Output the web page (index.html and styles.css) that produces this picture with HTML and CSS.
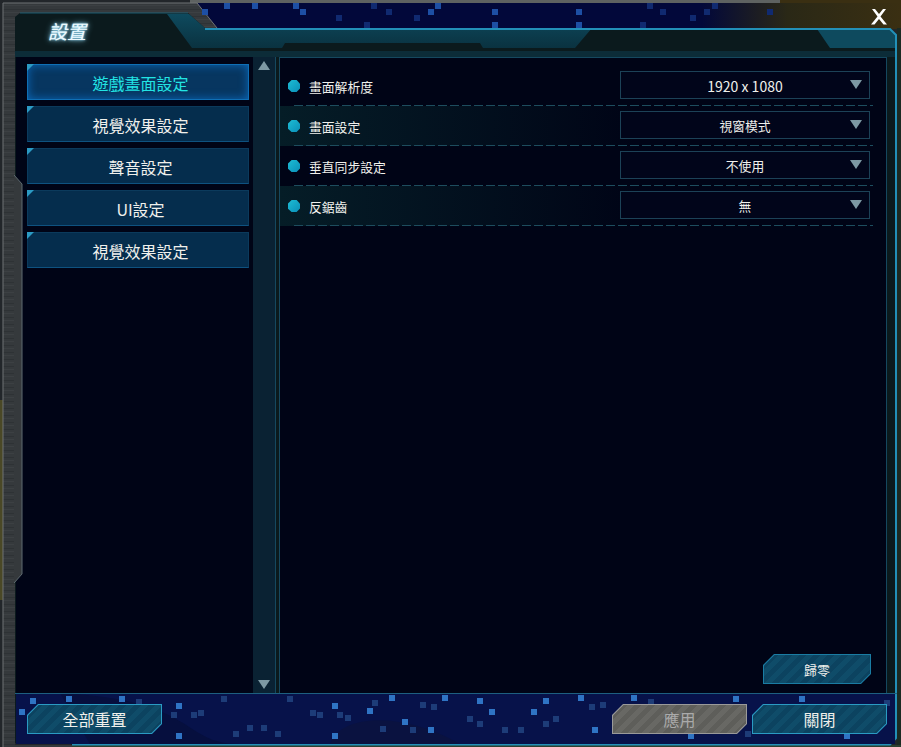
FILE: index.html
```html
<!DOCTYPE html>
<html lang="zh-Hant">
<head>
  <meta charset="UTF-8">
  <title>設置</title>
  <link rel="stylesheet" href="styles.css">
</head>
<body>
  <svg class="chrome" width="901" height="747" viewBox="0 0 901 747">
    <defs>
      <pattern id="metal" width="8" height="7" patternUnits="userSpaceOnUse">
        <rect width="8" height="7" fill="#35393c"/>
        <rect y="2" width="8" height="1" fill="#2e3235"/>
        <rect y="5" width="8" height="1" fill="#3c4043"/>
      </pattern>
      <linearGradient id="strip" x1="0" x2="1" y1="0" y2="0">
        <stop offset="0.72" stop-color="#02083a"/>
        <stop offset="0.84" stop-color="#2a2816"/>
        <stop offset="1" stop-color="#3a2f12"/>
      </linearGradient>
      <linearGradient id="teal" x1="0" x2="0" y1="0" y2="1">
        <stop offset="0" stop-color="#0e4a5e"/>
        <stop offset="1" stop-color="#0a3240"/>
      </linearGradient>
    </defs>

    <!-- backdrop -->
    <rect width="901" height="747" fill="#22262a"/>
    <rect y="400" width="3" height="200" fill="#4a4826"/>
    <rect x="190" width="711" height="3" fill="#5e6261"/>
    <rect x="780" width="121" height="3" fill="#3a2f12"/>
    <rect x="190" y="3" width="711" height="26" fill="url(#strip)"/>
    <rect x="897" y="28" width="4" height="719" fill="#1c2a22"/>
    <rect x="72" y="745" width="829" height="2" fill="#2c4030"/>

    <!-- metal frame -->
    <path d="M3 3H197L217 28H15V745H72V747H3Z" fill="url(#metal)"/>
    <path d="M3 3H197L217 28M3 3V747" fill="none" stroke="#6e7274"/>

    <!-- window body -->
    <path d="M15 17 20 13H188L205 28H890L897 35V738L890 745H72L70 743H15Z" fill="#0b1a1d"/>
    <path d="M20 13H188" fill="none" stroke="#1a5a70"/>
    <path d="M167 14H189L205 28H592L575 48H483L480 43H285L282 48H192Z" fill="url(#teal)"/>
    <path d="M817 29H890L897 35V48H830Z" fill="#0e4a5e"/>
    <rect x="15" y="51" width="882" height="6" fill="#0c2c38"/>
    <path d="M205 29H890L896 35V738L890 744.500H72" fill="none" stroke="#2290b8" stroke-width="2"/>

    <!-- footer -->
    <rect x="16" y="693" width="879" height="51" fill="#07124a"/>
    <path d="M60 693C200 700 180 744 240 744H90Z" fill="#060f3e"/>
    <path d="M330 744C340 715 400 710 460 744Z" fill="#0a1240"/>
    <g class="px bright">
      <rect x="30" y="698"/><rect x="66" y="696"/><rect x="119" y="696"/><rect x="19" y="709"/>
      <rect x="176" y="703"/><rect x="176" y="733"/><rect x="332" y="703"/><rect x="332" y="733"/>
      <rect x="367" y="708"/><rect x="389" y="695"/><rect x="402" y="719"/><rect x="428" y="727"/>
      <rect x="442" y="695"/><rect x="477" y="698"/><rect x="489" y="709"/><rect x="531" y="709"/>
      <rect x="543" y="698"/><rect x="578" y="695"/><rect x="592" y="727"/><rect x="631" y="695"/>
      <rect x="733" y="696"/><rect x="799" y="696"/><rect x="688" y="733"/><rect x="844" y="733"/>
    </g>
    <g class="px dim">
      <rect x="136" y="699"/><rect x="171" y="712"/><rect x="191" y="712"/><rect x="198" y="710"/>
      <rect x="221" y="696"/><rect x="287" y="696"/><rect x="247" y="725"/><rect x="261" y="725"/>
      <rect x="233" y="731"/><rect x="275" y="731"/><rect x="317" y="712"/><rect x="310" y="710"/>
      <rect x="337" y="712"/><rect x="345" y="715"/><rect x="372" y="700"/><rect x="431" y="704"/>
      <rect x="420" y="702"/><rect x="410" y="727"/><rect x="380" y="726"/><rect x="467" y="716"/>
      <rect x="477" y="721"/><rect x="502" y="727"/><rect x="518" y="727"/><rect x="543" y="721"/>
      <rect x="553" y="716"/><rect x="589" y="704"/><rect x="600" y="702"/><rect x="648" y="699"/>
      <rect x="884" y="700"/><rect x="745" y="731"/>
    </g>

    <!-- top strip pixels -->
    <g class="px top">
      <rect x="224" y="3"/><rect x="252" y="3"/><rect x="293" y="3"/><rect x="435" y="3"/>
      <rect x="202" y="9"/><rect x="300" y="9"/><rect x="428" y="9"/><rect x="492" y="9"/>
      <rect x="576" y="9"/><rect x="492" y="22"/><rect x="576" y="22"/>
    </g>
    <g class="px top-dim">
      <rect x="371" y="3"/><rect x="386" y="9"/><rect x="336" y="15"/><rect x="414" y="15"/>
      <rect x="364" y="22"/><rect x="640" y="22"/><rect x="660" y="9"/><rect x="704" y="9"/>
      <rect x="690" y="15"/><rect x="647" y="3"/><rect x="712" y="3"/><rect x="767" y="9"/>
    </g>
  </svg>

  <div class="window">
    <header class="title-bar">
      <h1>設置</h1>
    </header>

    <div class="panels">
      <nav class="side">
        <ul class="menu">
          <li class="menu-item active">遊戲畫面設定</li>
          <li class="menu-item">視覺效果設定</li>
          <li class="menu-item">聲音設定</li>
          <li class="menu-item">UI設定</li>
          <li class="menu-item">視覺效果設定</li>
        </ul>
        <div class="scrollbar">
          <span class="arrow up"></span>
          <span class="arrow"></span>
        </div>
      </nav>

      <section class="content">
        <div class="rows">
          <div class="row">
            <span class="bullet"></span>
            <span class="label">畫面解析度</span>
            <div class="select"><span class="value wide">1920 x 1080</span><span class="arrow"></span></div>
          </div>
          <div class="row">
            <span class="bullet"></span>
            <span class="label">畫面設定</span>
            <div class="select"><span class="value">視窗模式</span><span class="arrow"></span></div>
          </div>
          <div class="row">
            <span class="bullet"></span>
            <span class="label">垂直同步設定</span>
            <div class="select"><span class="value">不使用</span><span class="arrow"></span></div>
          </div>
          <div class="row">
            <span class="bullet"></span>
            <span class="label">反鋸齒</span>
            <div class="select"><span class="value">無</span><span class="arrow"></span></div>
          </div>
        </div>
        <div class="content-foot">
          <button class="btn small">歸零</button>
        </div>
      </section>
    </div>

    <footer class="actions">
      <button class="btn">全部重置</button>
      <div class="actions-right">
        <button class="btn disabled">應用</button>
        <button class="btn">關閉</button>
      </div>
    </footer>
  </div>

  <!-- bit of frame that cuts into the left panel -->
  <svg class="frame-notch" width="10" height="420" viewBox="0 0 10 420">
    <path d="M0 0 8 9V399L0 408Z" fill="#35393c"/>
    <path d="M0 0 8 9V399L0 408" fill="none" stroke="#5e6a70"/>
  </svg>

  <svg class="close" width="16" height="16" viewBox="0 0 16 16">
    <path d="M1 0H4L8 5 12 0H15L9.500 7.500 16 15.500H12.500L8 10 3.500 15.500H0L6.500 7.500Z" fill="#fff"/>
  </svg>
</body>
</html>
```

FILE: styles.css
```css
* {
  box-sizing: border-box;
}
html, body {
  margin: 0;
  height: 100%;
}
body {
  position: relative;
  width: 901px;
  height: 747px;
  overflow: hidden;
  background: #22262a;
  font-family: "Noto Sans CJK TC", "Liberation Sans", sans-serif;
  color: #f0f0ec;
}
.chrome {
  position: absolute;
  left: 0;
  top: 0;
}
.px rect {
  width: 6px;
  height: 6px;
}
.px.bright {
  fill: #2f74c4;
}
.px.dim {
  fill: #1d3c78;
}
.px.top {
  fill: #1d4fa4;
}
.px.top-dim {
  fill: #102a70;
}
.frame-notch {
  position: absolute;
  left: 14px;
  top: 175px;
}
.close {
  position: absolute;
  left: 871px;
  top: 9px;
}
.window {
  position: relative;
  width: 882px;
  height: 745px;
  margin-left: 15px;
  padding-top: 13px;
  display: flex;
  flex-direction: column;
}
.title-bar {
  height: 44px;
  padding: 6px 0 0 33px;
}
.title-bar h1 {
  margin: 0;
  font-size: 19px;
  line-height: 24px;
  font-weight: 400;
  font-style: italic;
  color: #eef9fd;
  text-shadow: 0 0 6px #8fd8f5, 0 0 3px #8fd8f5, 0 0 1px #c8eefa;
}
.panels {
  height: 636px;
  display: flex;
  gap: 3px;
  padding-left: 1px;
}
.side {
  width: 260px;
  display: flex;
  background: #000416;
  border-right: 1px solid #15485f;
}
.menu {
  list-style: none;
  margin: 0;
  padding: 7px 4px 0 11px;
  width: 237px;
  display: flex;
  flex-direction: column;
  gap: 6px;
}
.menu-item {
  position: relative;
  height: 36px;
  padding: 2px 0 0 5px;
  display: flex;
  align-items: center;
  justify-content: center;
  font-size: 16px;
  background: #052d4d;
  border: 1px solid #0b3a5c;
  border-bottom-color: #0e5280;
}
.menu-item::before {
  content: "";
  position: absolute;
  left: -1px;
  top: -1px;
  border-style: solid;
  border-width: 7px 7px 0 0;
  border-color: #2b9ac4 transparent transparent transparent;
}
.menu-item.active {
  color: #22e4e4;
  background: #073660;
  border-color: #0f6fb5;
  box-shadow: inset 0 0 10px #0b68ba;
}
.scrollbar {
  width: 22px;
  padding: 4px 0;
  display: flex;
  flex-direction: column;
  justify-content: space-between;
  align-items: center;
  background: #0a2233;
}
.arrow {
  width: 0;
  height: 0;
  border-left: 6px solid transparent;
  border-right: 6px solid transparent;
  border-top: 9px solid #7d99a4;
}
.arrow.up {
  border-top: 0;
  border-bottom: 9px solid #7d99a4;
}
.content {
  width: 608px;
  display: flex;
  flex-direction: column;
  justify-content: space-between;
  background: #000416;
  border: 1px solid #15485f;
  border-bottom: 0;
}
.rows {
  padding: 2px 13px 0 0;
}
.row {
  position: relative;
  height: 40px;
  display: flex;
  align-items: flex-start;
  padding: 5px 0 0 8px;
}
.row:first-child {
  height: 46px;
  padding-top: 11px;
}
.row:nth-child(even) {
  background: linear-gradient(90deg, #051d27, #000416 60%);
}
/* dashed rule under each row */
.row::after {
  content: "";
  position: absolute;
  left: 14px;
  right: 0;
  bottom: 0;
  height: 1px;
  background: repeating-linear-gradient(90deg, #1d4d5e 0 9px, transparent 9px 12px);
}
.bullet {
  width: 12px;
  height: 12px;
  margin-top: 9px;
  background: linear-gradient(135deg, #1dbcd4, #0a8fb8);
  clip-path: polygon(30% 0, 72% 0, 100% 32%, 100% 70%, 72% 100%, 30% 100%, 0 72%, 0 30%);
}
.label {
  margin: 8px 0 0 9px;
  font-size: 12.8px;
  line-height: 16px;
}
.select {
  position: relative;
  width: 250px;
  height: 28px;
  margin-left: auto;
  margin-right: 3px;
  display: flex;
  align-items: center;
  justify-content: center;
  font-size: 12.8px;
  background: #01051a;
  border: 1px solid #1c4257;
}
.select .arrow {
  position: absolute;
  right: 7px;
  top: 8px;
}
.value {
  padding-top: 1px;
}
.value.wide {
  font-size: 14px;
}
.content-foot {
  display: flex;
  justify-content: flex-end;
  padding: 0 15px 9px 0;
}
.actions {
  height: 52px;
  padding: 10px 10px 0 12px;
  display: flex;
  justify-content: space-between;
  border-top: 1px solid #1d5f80;
}
.actions-right {
  display: flex;
  gap: 5px;
}
.btn {
  width: 135px;
  height: 30px;
  padding: 0;
  border: 0;
  font: inherit;
  font-size: 16px;
  color: #f0f0ec;
  cursor: pointer;
  background: #2a9bc4;
  clip-path: polygon(11px 0, 100% 0, 100% calc(100% - 10px), calc(100% - 10px) 100%, 0 100%, 0 11px);
  position: relative;
  z-index: 0;
}
.btn::before {
  content: "";
  position: absolute;
  inset: 1px;
  z-index: -1;
  background: repeating-linear-gradient(135deg, #0f4c69 0 5px, #0c4360 5px 10px);
  clip-path: polygon(10.500px 0, 100% 0, 100% calc(100% - 9.500px), calc(100% - 9.500px) 100%, 0 100%, 0 10.500px);
}
.btn.small {
  width: 108px;
  font-size: 13px;
  background: #1a7ca3;
}
.btn.disabled {
  color: #aaaaaa;
  background: #9a9a9a;
}
.btn.disabled::before {
  background: repeating-linear-gradient(135deg, #686864 0 5px, #5e5e5a 5px 10px);
}
```
